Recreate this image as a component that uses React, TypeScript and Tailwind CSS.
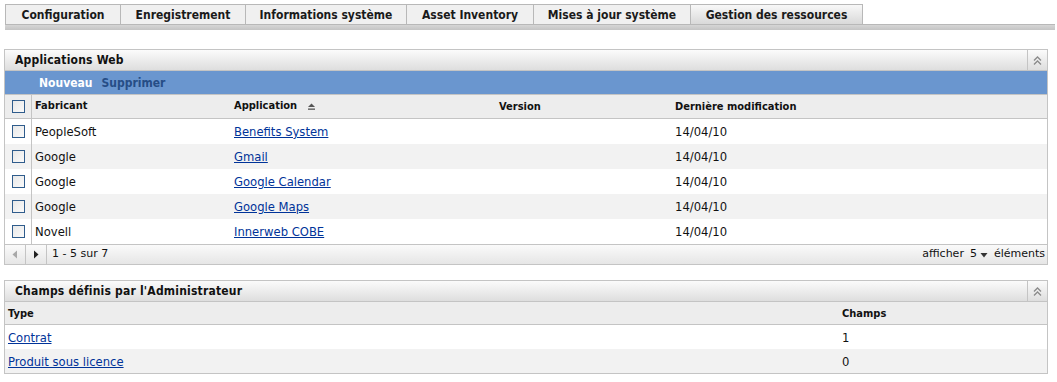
import React from "react";

const tabs = [
  { label: "Configuration", w: 115 },
  { label: "Enregistrement", w: 125 },
  { label: "Informations système", w: 161 },
  { label: "Asset Inventory", w: 127 },
  { label: "Mises à jour système", w: 157 },
  { label: "Gestion des ressources", w: 173, active: true },
];

const rows = [
  { maker: "PeopleSoft", app: "Benefits System", date: "14/04/10" },
  { maker: "Google", app: "Gmail", date: "14/04/10" },
  { maker: "Google", app: "Google Calendar", date: "14/04/10" },
  { maker: "Google", app: "Google Maps", date: "14/04/10" },
  { maker: "Novell", app: "Innerweb COBE", date: "14/04/10" },
];

const cond = { fontFamily: '"DejaVu Sans Condensed", "DejaVu Sans", sans-serif' };
const sans = { fontFamily: '"DejaVu Sans", "Liberation Sans", sans-serif' };

function Checkbox() {
  return (
    <div className="w-[13px] h-[13px] border border-[#2f5c8c] bg-gradient-to-br from-[#e8e8e8] to-[#fafafa]" />
  );
}

function Collapse() {
  return (
    <div className="w-[20px] h-full border-l border-[#c4c4c4] flex items-center justify-center">
      <svg width="11" height="11" viewBox="0 0 11 11" fill="none" stroke="#8a8a8a" strokeWidth="1.3">
        <path d="M2 5.5 L5.5 2 L9 5.5" />
        <path d="M2 9.5 L5.5 6 L9 9.5" />
      </svg>
    </div>
  );
}

function PanelHeader({ title }: { title: string }) {
  return (
    <div className="h-[21px] flex items-stretch bg-gradient-to-b from-[#fbfbfb] to-[#dedede] border-b border-[#c4c4c4]">
      <div className="flex-1 flex items-center pl-[10px] text-[12px] font-bold text-[#111] tracking-[0.2px]" style={cond}>
        {title}
      </div>
      <Collapse />
    </div>
  );
}

export default function App() {
  return (
    <div className="w-[1057px] h-[382px] bg-white text-[#111]" style={sans}>
      {/* Tabs */}
      <div className="pl-[5px] pt-[4px]">
        <div className="flex h-[20px]">
          {tabs.map((t) => (
            <div
              key={t.label}
              className={
                "h-[20px] flex items-center justify-center border-t border-l border-[#b8b8b8] text-[12px] font-bold text-[#1a1a1a] " +
                (t.active
                  ? "bg-gradient-to-b from-[#f8f8f8] to-[#d9d9d9] border-r"
                  : "bg-[#f0f0f0]")
              }
              style={{ ...cond, width: t.w }}
            >
              {t.label}
            </div>
          ))}
        </div>
        <div className="h-[6px] w-[1050px] bg-gradient-to-b from-[#d6d6d6] to-[#c4c4c4] border-t border-[#b8b8b8]" />
      </div>

      {/* Panel 1 */}
      <div className="mt-[19px] ml-[4px] w-[1044px] border border-[#c4c4c4]">
        <PanelHeader title="Applications Web" />
        <div className="h-[23px] bg-[#6a96cf] flex items-center pl-[34px] gap-[9px] text-[12px] font-bold" style={cond}>
          <span className="text-white">Nouveau</span>
          <span className="text-[#264d86]">Supprimer</span>
        </div>
        <div className="h-[25px] bg-[#ededed] border-t border-b border-[#c4c4c4] flex text-[11px] font-bold" style={cond}>
          <div className="w-[27px] border-r border-[#c4c4c4] flex items-center justify-center pl-[1px]">
            <Checkbox />
          </div>
          <div className="w-[202px] pl-[3px] flex items-center">Fabricant</div>
          <div className="w-[265px] flex items-center gap-[10px]">
            <span>Application</span>
            <svg width="9" height="8" viewBox="0 0 9 8" fill="#555">
              <path d="M4.5 0.5 L8 4 L1 4 Z" />
              <rect x="1" y="5.5" width="7" height="1.3" />
            </svg>
          </div>
          <div className="w-[176px] flex items-center pt-[1px]">Version</div>
          <div className="flex-1 flex items-start pt-[4px]">Dernière modification</div>
        </div>
        {rows.map((r, i) => (
          <div key={i} className={"h-[25px] flex text-[11.6px] " + (i % 2 === 1 ? "bg-[#f2f2f2]" : "bg-white")}>
            <div className="w-[27px] border-r border-[#c4c4c4] flex items-center justify-center pl-[1px]">
              <Checkbox />
            </div>
            <div className="w-[202px] pl-[3px] pt-[2px] flex items-center">{r.maker}</div>
            <div className="w-[265px] pt-[2px] flex items-center">
              <a className="text-[#003399] underline" href="#">{r.app}</a>
            </div>
            <div className="w-[176px]" />
            <div className="flex-1 pt-[2px] flex items-center">{r.date}</div>
          </div>
        ))}
        <div className="h-[20px] border-t border-[#c4c4c4] bg-gradient-to-b from-[#fafafa] to-[#e6e6e6] flex items-stretch text-[11px]">
          <div className="w-[21px] border-r border-[#c4c4c4] flex items-center justify-center">
            <svg width="6" height="9" viewBox="0 0 6 9" fill="#a8a8a8"><path d="M5 0.5 L0.5 4.5 L5 8.5 Z" /></svg>
          </div>
          <div className="w-[21px] border-r border-[#c4c4c4] flex items-center justify-center">
            <svg width="6" height="9" viewBox="0 0 6 9" fill="#222"><path d="M1 0.5 L5.5 4.5 L1 8.5 Z" /></svg>
          </div>
          <div className="pl-[5px] flex items-center flex-1">1 - 5 sur 7</div>
          <div className="flex items-center pr-[2px] gap-[6px]">
            <span>afficher</span>
            <span className="flex items-center gap-[3px]">
              5
              <svg width="8" height="6" viewBox="0 0 8 6" fill="#333"><path d="M0.5 1 L7.5 1 L4 5.5 Z" /></svg>
            </span>
            <span>éléments</span>
          </div>
        </div>
      </div>

      {/* Panel 2 */}
      <div className="mt-[15px] ml-[4px] w-[1044px] border border-[#c4c4c4]">
        <PanelHeader title="Champs définis par l'Administrateur" />
        <div className="h-[23px] pt-[2px] bg-[#ededed] border-b border-[#c4c4c4] flex items-center text-[11px] font-bold" style={cond}>
          <div className="w-[837px] pl-[3px]">Type</div>
          <div>Champs</div>
        </div>
        {[
          { t: "Contrat", n: "1" },
          { t: "Produit sous licence", n: "0" },
        ].map((r, i) => (
          <div key={i} className={"h-[24px] pt-[3px] flex items-center text-[11.6px] " + (i % 2 === 1 ? "bg-[#f2f2f2]" : "bg-white")}>
            <div className="w-[837px] pl-[3px]">
              <a className="text-[#003399] underline" href="#">{r.t}</a>
            </div>
            <div>{r.n}</div>
          </div>
        ))}
      </div>
    </div>
  );
}
